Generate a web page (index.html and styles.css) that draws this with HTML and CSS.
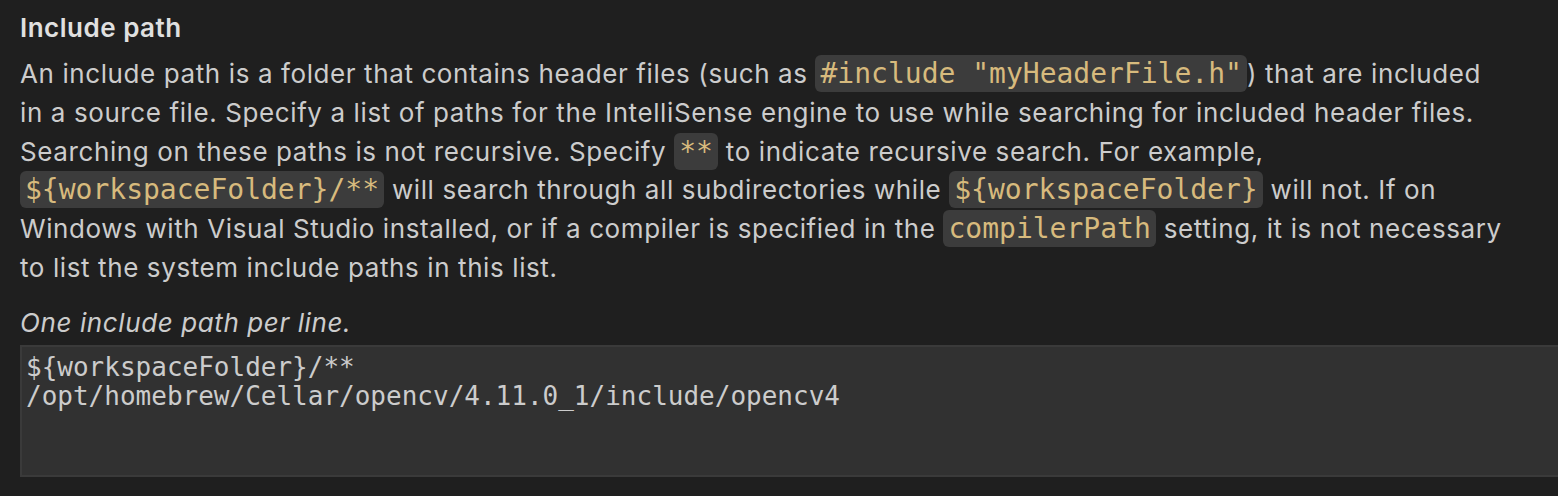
FILE: index.html
```html
<!DOCTYPE html>
<html>
<head>
<meta charset="utf-8">
<link rel="stylesheet" href="styles.css">
</head>
<body>
<div class="setting">
  <div class="title">Include path</div>
  <div class="desc">An include path is a folder that contains header files (such as <code>#include "myHeaderFile.h"</code>) that are included in a source file. Specify a list of paths for the IntelliSense engine to use while searching for included header files. Searching on these paths is not recursive. Specify <code>**</code> to indicate recursive search. For example, <code>${workspaceFolder}/**</code> will search through all subdirectories while <code>${workspaceFolder}</code> will not. If on Windows with Visual Studio installed, or if a compiler is specified in the <code>compilerPath</code> setting, it is not necessary to list the system include paths in this list.</div>
  <div class="hint">One include path per line.</div>
  <div class="editor">${workspaceFolder}/**
/opt/homebrew/Cellar/opencv/4.11.0_1/include/opencv4</div>
</div>
</body>
</html>
```
FILE: styles.css
```css
html, body {
  margin: 0;
  padding: 0;
  background: #1f1f1f;
  overflow: hidden;
}
body {
  width: 1558px;
  height: 496px;
}
.setting {
  padding: 10px 0 0 20px;
  font-family: Inter, "Noto Sans", sans-serif;
  color: #cccccc;
}
.title {
  font-size: 26px;
  font-weight: 600;
  letter-spacing: 0.5px;
  line-height: 36px;
  color: #e0e0e0;
}
.desc {
  font-size: 26px;
  letter-spacing: 0.6px;
  line-height: 38.8px;
  width: 1488px;
  margin-top: 9px;
}
.desc code {
  font-family: "DejaVu Sans Mono", monospace;
  font-size: 28px;
  letter-spacing: 0;
  color: #d7ba7d;
  background: #3c3c3c;
  border-radius: 6px;
  padding: 2px 5px;
}
.hint {
  margin-top: 16px;
  font-size: 26px;
  letter-spacing: 0.6px;
  font-style: italic;
  line-height: 38px;
}
.editor {
  margin-top: 3px;
  width: 1560px;
  height: 132px;
  box-sizing: border-box;
  border: 2px solid #3a3a3a;
  border-right: none;
  background: #313131;
  padding: 6px 4px;
  font-family: "DejaVu Sans Mono", monospace;
  font-size: 26px;
  line-height: 29px;
  white-space: pre;
  color: #cccccc;
}
```
